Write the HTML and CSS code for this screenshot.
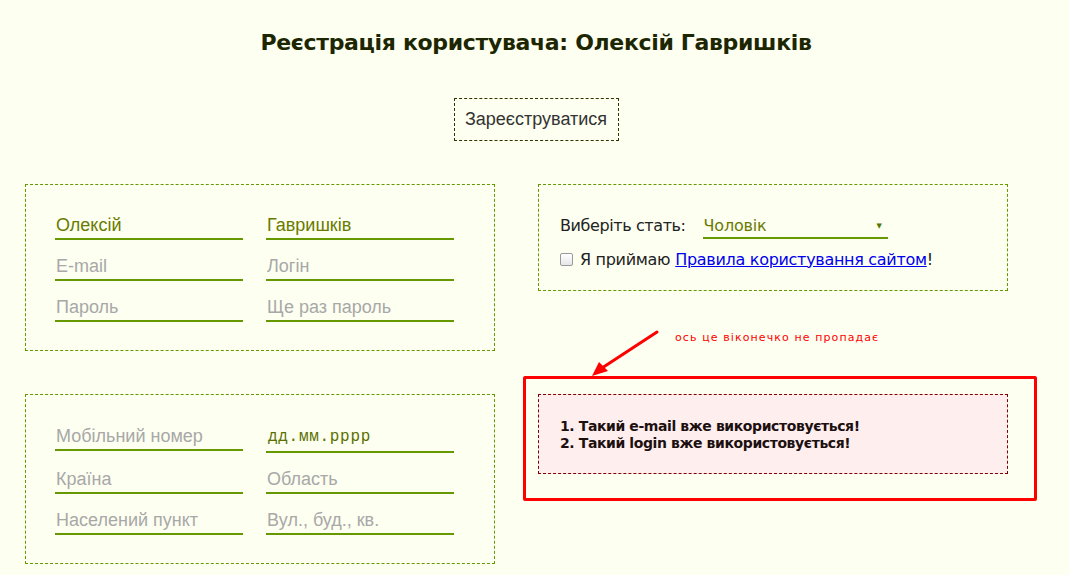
FILE: index.html
```html
<!DOCTYPE html>
<html lang="uk">
<head>
<meta charset="utf-8">
<title>Реєстрація</title>
<link rel="stylesheet" href="styles.css">
</head>
<body>
<h1 class="title">Реєстрація користувача: Олексій Гавришків</h1>
<div class="actions"><button class="btn">Зареєструватися</button></div>
<div class="grid">
  <div class="card">
    <div class="fields">
      <input class="inp filled" value="Олексій">
      <input class="inp filled" value="Гавришків">
      <input class="inp" placeholder="E-mail">
      <input class="inp" placeholder="Логін">
      <input class="inp" placeholder="Пароль">
      <input class="inp" placeholder="Ще раз пароль">
    </div>
  </div>
  <div class="card card-side">
    <div class="gender">
      <span class="label">Виберіть стать:</span>
      <div class="select"><span>Чоловік</span><span class="caret">▼</span></div>
    </div>
    <label class="agree"><span class="check"></span>Я приймаю <a href="#">Правила користування сайтом</a>!</label>
  </div>
  <div class="card card-b">
    <div class="fields">
      <input class="inp" placeholder="Мобільний номер">
      <div class="inp date">дд.мм.рррр</div>
      <input class="inp" placeholder="Країна">
      <input class="inp" placeholder="Область">
      <input class="inp" placeholder="Населений пункт">
      <input class="inp" placeholder="Вул., буд., кв.">
    </div>
  </div>
  <div class="errors-cell">
    <div class="errors">
      <ol>
        <li>Такий e-mail вже використовується!</li>
        <li>Такий login вже використовується!</li>
      </ol>
    </div>
    <div class="mark"></div>
    <svg class="arrow" width="80" height="60" viewBox="0 0 80 60">
      <line x1="71" y1="6" x2="16" y2="42" stroke="#f00" stroke-width="3" stroke-linecap="round"/>
      <polygon points="6,50 13,36 22,45" fill="#f00"/>
    </svg>
    <span class="note">ось це віконечко не пропадає</span>
  </div>
</div>
</body>
</html>
```
FILE: styles.css
```css
html, body { margin: 0; padding: 0; }
body {
  background: #fdfff0;
  font-family: "Liberation Sans", Arial, sans-serif;
  color: #222;
  padding: 0 0 0 25px;
  width: 1022px;
}
.title {
  margin: 0;
  padding-top: 30px;
  height: 34px;
  text-align: center;
  font-family: "DejaVu Sans", Verdana, sans-serif;
  font-weight: bold;
  font-size: 22px;
  letter-spacing: -0.33px;
  color: #1c2600;
}
.actions {
  display: flex;
  justify-content: center;
  padding-top: 34px;
}
.btn {
  width: 165px;
  height: 43px;
  background: transparent;
  border: 1px dashed #333300;
  font-family: "Liberation Sans", Arial, sans-serif;
  font-size: 18px;
  color: #333;
  padding: 0;
}
.grid {
  display: grid;
  grid-template-columns: 470px 470px;
  column-gap: 43px;
  row-gap: 43px;
  margin-top: 43px;
  align-items: start;
}
.card {
  border: 1px dashed #669900;
  padding: 28px 40px 28px 29px;
}
.card-b { padding: 29px 40px 28px 29px; }
.fields {
  display: grid;
  grid-template-columns: 188px 188px;
  column-gap: 23px;
  row-gap: 14px;
  align-items: start;
}
.inp {
  box-sizing: border-box;
  height: 27px;
  width: 188px;
  border: 0;
  border-bottom: 2px solid #669900;
  background: transparent;
  font-family: "Liberation Sans", Arial, sans-serif;
  font-size: 18px;
  padding: 0 1px;
  outline: none;
  color: #6a7a00;
}
.inp::placeholder { color: #a8a8a8; opacity: 1; }
.date {
  font-family: "Liberation Mono", "Courier New", monospace;
  font-size: 16px;
  letter-spacing: 0.7px;
  color: #5b7000;
  padding: 4px 2px 0;
  height: 29px;
}
.card-side {
  padding: 27px 20px 21px 21px;
  font-family: "DejaVu Sans", Tahoma, sans-serif;
  font-size: 16px;
  color: #222;
}
.gender {
  display: flex;
  align-items: flex-end;
}
.label { padding-bottom: 4px; letter-spacing: -0.4px; }
.select {
  margin-left: 17px;
  width: 185px;
  height: 27px;
  box-sizing: border-box;
  border-bottom: 2px solid #669900;
  display: flex;
  justify-content: space-between;
  align-items: center;
  color: #6a7a00;
  padding: 2px 6px 0 1px;
  letter-spacing: -0.2px;
}
.caret { font-size: 7px; color: #557700; }
.agree {
  display: flex;
  align-items: center;
  height: 20px;
  margin-top: 10px;
  letter-spacing: -0.3px;
}
.check {
  width: 11px;
  height: 11px;
  border: 1px solid #999;
  border-radius: 2px;
  background: linear-gradient(#fff, #e6e6e6);
  margin: 0 7px 0 0;
}
.agree a { color: #0000ee; margin-left: 5px; }
.errors-cell { position: relative; }
.errors {
  border: 1px dashed #800000;
  background: #ffeeee;
  height: 78px;
}
.errors ol {
  margin: 0;
  padding: 23px 0 0 21px;
  list-style-position: inside;
  font-family: "DejaVu Sans", Verdana, sans-serif;
  font-weight: bold;
  font-size: 14px;
  line-height: 17px;
  letter-spacing: -0.4px;
  color: #1c1010;
}
.mark {
  position: absolute;
  left: -15px;
  top: -18px;
  width: 508px;
  height: 119px;
  border: 3px solid #f00;
  border-radius: 2px;
}
.arrow {
  position: absolute;
  left: 48px;
  top: -68px;
}
.note {
  position: absolute;
  left: 137px;
  top: -63px;
  font-family: "DejaVu Sans", Verdana, sans-serif;
  font-size: 11px;
  letter-spacing: 1.1px;
  color: #f00;
}
```
